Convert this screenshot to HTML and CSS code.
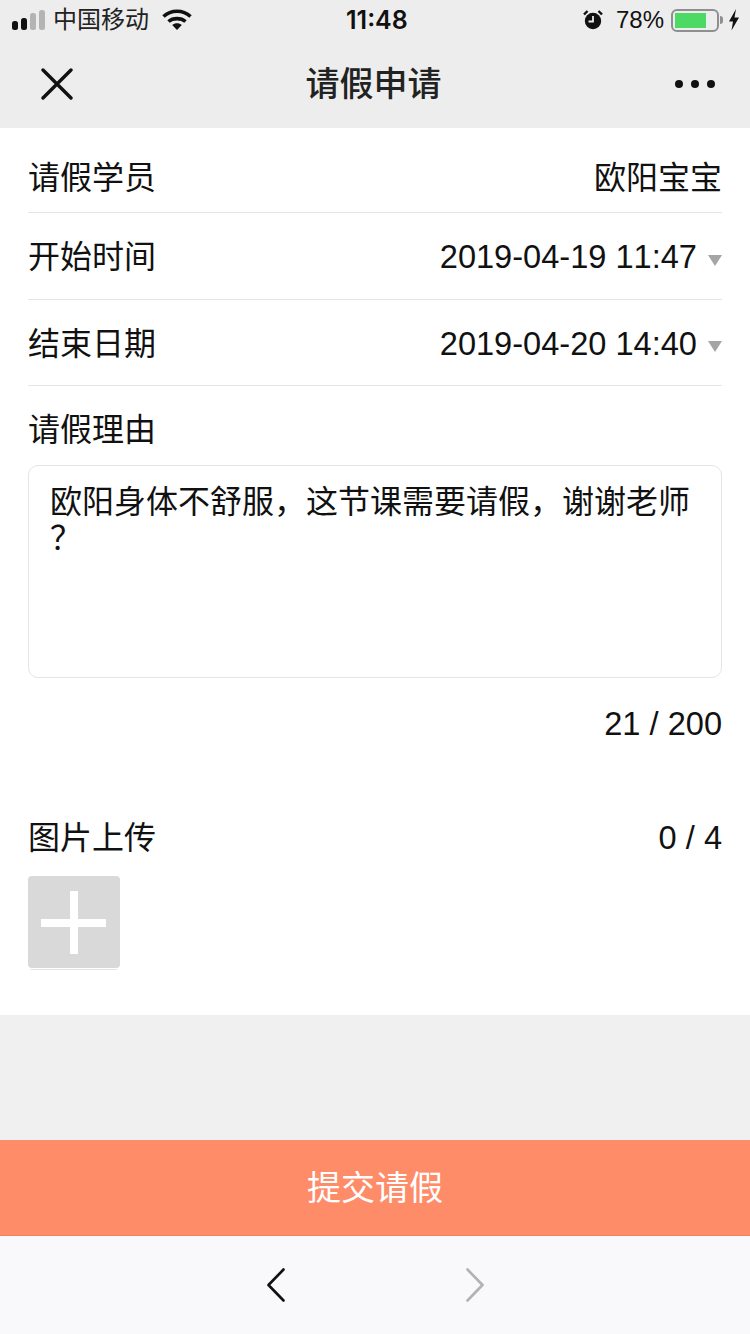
FILE: index.html
```html
<!DOCTYPE html>
<html lang="zh-CN">
<head>
    <meta charset="UTF-8">
    <meta name="viewport" content="width=device-width, initial-scale=1.0">
    <title>请假申请</title>
    <link rel="stylesheet" href="styles.css">
</head>
<body>
    <div class="status-bar">
        <div class="status-left">
            <svg class="signal" width="34" height="22" viewBox="0 0 34 22">
                <rect x="0" y="12" width="6" height="9" rx="2.5" fill="#111"/>
                <rect x="9" y="9" width="6" height="12" rx="2.5" fill="#111"/>
                <rect x="18" y="4" width="6" height="17" rx="2.500" fill="#b4b4b4"/>
                <rect x="27" y="1" width="6" height="20" rx="2.500" fill="#b4b4b4"/>
            </svg>
            <span class="carrier">中国移动</span>
            <svg class="wifi" width="30" height="22" viewBox="0 0 30 22">
                <path d="M1.5 7.500C9 .5 21 .5 28.500 7.500" fill="none" stroke="#111" stroke-width="3.600"/>
                <path d="M6.500 12.500C11 8.600 19 8.600 23.500 12.500" fill="none" stroke="#111" stroke-width="3.600"/>
                <path d="M10.200 16C13 13.600 17 13.600 19.800 16L15 21Z" fill="#111"/>
            </svg>
        </div>
        <div class="status-time">11:48</div>
        <div class="status-right">
            <svg class="alarm" width="20" height="22" viewBox="0 0 20 22">
                <circle cx="10" cy="12" r="8.200" fill="#111"/>
                <path d="M10 7v5.500H5.500" fill="none" stroke="#ededed" stroke-width="1.800"/>
                <path d="M1 5.500 4.500 2M19 5.500 15.500 2" stroke="#111" stroke-width="2.400" fill="none"/>
            </svg>
            <span class="battery-text">78%</span>
            <div class="battery">
                <div class="battery-fill" style="width: 78%"></div>
            </div>
            <div class="battery-cap"></div>
            <svg class="bolt" width="12" height="22" viewBox="0 0 12 22">
                <path d="M8 0 1 12.500h4L3.500 21.500 11 8.500H6.500Z" fill="#111"/>
            </svg>
        </div>
    </div>

    <div class="nav-bar">
        <svg class="nav-close" width="32" height="32" viewBox="0 0 32 32">
            <path d="M2 2 30 30M30 2 2 30" stroke="#111" stroke-width="3.400" stroke-linecap="round"/>
        </svg>
        <div class="nav-title">请假申请</div>
        <div class="nav-more">
            <span class="dot"></span>
            <span class="dot"></span>
            <span class="dot"></span>
        </div>
    </div>

    <div class="form">
        <div class="form-row row-student">
            <span>请假学员</span>
            <span>欧阳宝宝</span>
        </div>
        <div class="form-row">
            <span>开始时间</span>
            <span class="picker"><span class="num">2019-04-19 11:47</span><i class="caret"></i></span>
        </div>
        <div class="form-row">
            <span>结束日期</span>
            <span class="picker"><span class="num">2019-04-20 14:40</span><i class="caret"></i></span>
        </div>

        <div class="reason-label">请假理由</div>
        <div class="reason-box">欧阳身体不舒服，这节课需要请假，谢谢老师？</div>
        <div class="reason-count num">21 / 200</div>

        <div class="upload-head">
            <span>图片上传</span>
            <span class="num">0 / 4</span>
        </div>
        <div class="upload-btn">
            <span class="plus-h"></span>
            <span class="plus-v"></span>
        </div>
    </div>

    <div class="spacer"></div>

    <div class="submit-btn">提交请假</div>

    <div class="toolbar">
        <svg width="22" height="36" viewBox="0 0 22 36">
            <path d="M18.500 2.500 3.500 18l15 15.500" fill="none" stroke="#111" stroke-width="2.600" stroke-linecap="round" stroke-linejoin="round"/>
        </svg>
        <svg width="22" height="36" viewBox="0 0 22 36">
            <path d="M3.500 2.500l15 15.500-15 15.500" fill="none" stroke="#b2b2b2" stroke-width="2.600" stroke-linecap="round" stroke-linejoin="round"/>
        </svg>
    </div>
</body>
</html>
```

FILE: styles.css
```css
* {
    box-sizing: border-box;
}

body {
    margin: 0;
    width: 750px;
    height: 1334px;
    overflow: hidden;
    display: flex;
    flex-direction: column;
    font-family: "Liberation Sans", "Noto Sans CJK SC", sans-serif;
    font-size: 32px;
    line-height: 44px;
    color: #111;
    background: #f0f0f0;
}

.num {
    font-size: 32.600px;
    font-kerning: none;
}

.status-bar {
    height: 40px;
    padding: 0 10px 0 12px;
    background: #ededed;
    display: flex;
    align-items: center;
    justify-content: space-between;
    position: relative;
    font-size: 24px;
    line-height: 30px;
}

.status-left,
.status-right {
    display: flex;
    align-items: center;
}

.signal {
    margin-right: 7px;
}

.carrier {
    color: #222;
}

.wifi {
    margin-left: 13px;
}

.status-time {
    position: absolute;
    left: 346px;
    top: 5px;
    font-family: "Inter", "Liberation Sans", sans-serif;
    font-size: 25px;
    font-weight: 600;
}

.battery-text {
    margin-left: 13px;
    margin-right: 7px;
}

.battery {
    width: 48px;
    height: 23px;
    border: 2px solid #8f8f8f;
    border-radius: 6px;
    padding: 2px;
}

.battery-fill {
    height: 100%;
    background: #4cd964;
}

.battery-cap {
    width: 3px;
    height: 8px;
    margin: 0 5px 0 1px;
    background: #8f8f8f;
    border-radius: 0 3px 3px 0;
}

.nav-bar {
    height: 88px;
    padding: 0 35px 0 41px;
    background: #ededed;
    display: flex;
    align-items: center;
    justify-content: space-between;
    position: relative;
}

.nav-title {
    position: absolute;
    left: 0;
    right: 3px;
    top: 22px;
    text-align: center;
    font-size: 34px;
    font-weight: 500;
    color: #222;
}

.nav-more {
    display: flex;
    gap: 8px;
}

.dot {
    width: 8px;
    height: 8px;
    border-radius: 50%;
    background: #111;
}

.form {
    height: 887px;
    padding: 0 28px;
    background: #fff;
}

.form-row {
    height: 86.500px;
    padding-top: 3px;
    display: flex;
    align-items: center;
    justify-content: space-between;
    border-bottom: 1px solid #e5e5e5;
}

.row-student {
    height: 85px;
    padding-top: 15px;
}

.picker {
    display: flex;
    align-items: center;
}

.caret {
    width: 0;
    height: 0;
    margin-left: 11px;
    margin-top: 6px;
    border-left: 7.500px solid transparent;
    border-right: 7.500px solid transparent;
    border-top: 11px solid #a5a5a5;
}

.reason-label {
    height: 79px;
    display: flex;
    align-items: center;
    padding-top: 8px;
}

.reason-box {
    height: 213px;
    padding: 18px 21px;
    border: 1px solid #e5e5e5;
    border-radius: 10px;
    line-height: 36px;
    line-break: anywhere;
}

.reason-count {
    height: 92px;
    display: flex;
    align-items: center;
    justify-content: flex-end;
}

.upload-head {
    height: 46px;
    margin-top: 45px;
    display: flex;
    align-items: center;
    justify-content: space-between;
}

.upload-btn {
    width: 92px;
    height: 92px;
    margin-top: 15px;
    position: relative;
    background: #d9d9d9;
    border-radius: 4px;
    box-shadow: 0 1px 0 #fff, 0 4px 0 -2px #e4e4e4;
}

.plus-h {
    position: absolute;
    left: 13px;
    top: 43px;
    width: 65px;
    height: 8px;
    background: #fff;
}

.plus-v {
    position: absolute;
    left: 42px;
    top: 15px;
    width: 8px;
    height: 63px;
    background: #fff;
}

.spacer {
    flex: 1;
    background: #f0f0f0;
}

.submit-btn {
    height: 96px;
    display: flex;
    align-items: center;
    justify-content: center;
    font-size: 34px;
    background: #ff8c69;
    border-bottom: 1px solid #ef8263;
    color: #fff;
}

.toolbar {
    height: 98px;
    padding-left: 265px;
    display: flex;
    align-items: center;
    gap: 177px;
    background: #f9f9fb;
}
```
